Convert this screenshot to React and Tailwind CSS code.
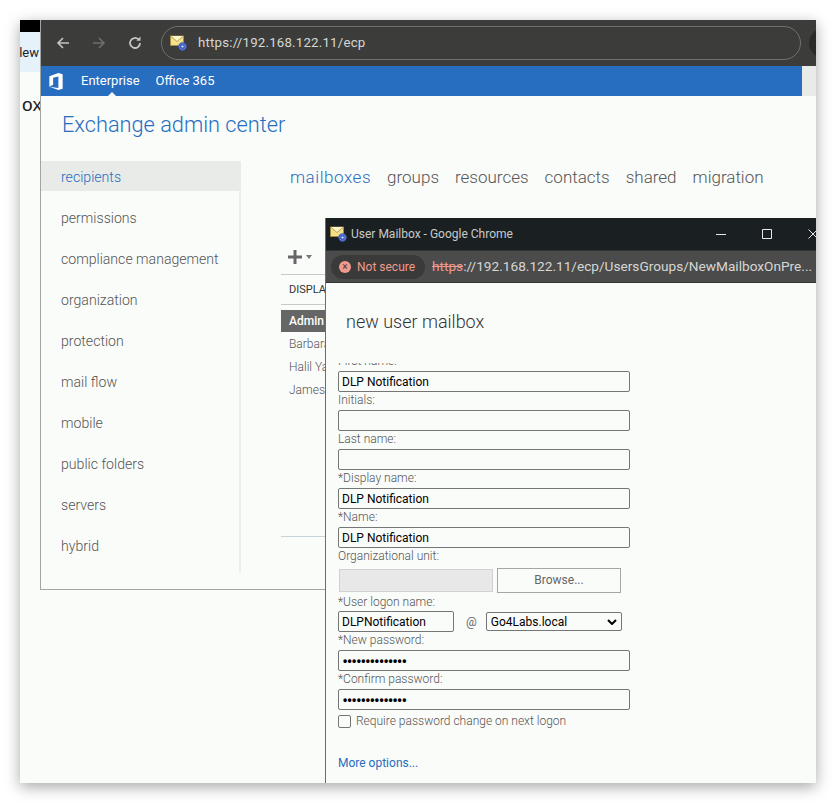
import React from "react";

const font = "font-['Roboto','Noto_Sans',sans-serif]";

const navItems = [
  "recipients",
  "permissions",
  "compliance management",
  "organization",
  "protection",
  "mail flow",
  "mobile",
  "public folders",
  "servers",
  "hybrid",
];

const tabs = ["mailboxes", "groups", "resources", "contacts", "shared", "migration"];

const people = ["Barbara", "Halil Ya", "James S"];

const CertIcon = ({ className }) => (
  <svg viewBox="0 0 17 16" className={className}>
    <path d="M0.500 1h13v9.500h-13z" fill="#f3e08a" stroke="#a98f3c" strokeWidth="0.8" />
    <path d="M0.500 1l6.500 5.500L13.500 1" fill="#fdf6c8" stroke="#a98f3c" strokeWidth="0.8" />
    <circle cx="12.500" cy="11.500" r="4.200" fill="#3c5cc4" />
    <circle cx="12.500" cy="11.500" r="2.800" fill="none" stroke="#9fb2ea" strokeWidth="0.8" strokeDasharray="1 1" />
    <circle cx="12.500" cy="11.500" r="1.100" fill="#dfe6fa" />
  </svg>
);

const Dots = () => (
  <span className="ml-px font-['Liberation_Sans',sans-serif] text-[12px] font-bold tracking-[0.35px]">••••••••••••••</span>
);

const Field = ({ label, value = "", hasDots }) => (
  <div className="flex flex-col">
    <div className="h-[18px] text-[12px] leading-[17px] font-light text-[#555]">{label}</div>
    <div className="h-[21px] w-[292px] rounded-[2px] border border-[#767676] px-[3px] text-[12px] leading-[21px] text-black">
      {hasDots ? <Dots /> : value}
    </div>
  </div>
);

const App = () => {
  return (
    <div className={`relative h-[803px] w-[836px] overflow-hidden bg-white ${font}`}>
      {/* Desktop window */}
      <div className="absolute left-5 top-5 h-[763px] w-[796px] overflow-hidden bg-[#fafcfa] shadow-[0_4px_14px_rgba(0,0,0,0.35)]">
        {/* Window behind, left strip */}
        <div className="absolute left-0 top-0 h-[12px] w-[21px] bg-black" />
        <div className="absolute left-0 top-[12px] flex h-[40px] w-[21px] items-center justify-end overflow-hidden bg-[#e6f2fa] pt-[2px] pr-[2px] text-[13px] text-[#222]">
          lew
        </div>
        <div className="absolute left-0 top-[73px] w-[21px] overflow-hidden pl-[2px] font-['Liberation_Sans',sans-serif] text-[19px] leading-[24px] whitespace-nowrap text-[#222]">
          ox
        </div>

        {/* Exchange browser window */}
        <div className="absolute left-[20px] top-0 h-[570px] w-[776px] border-b border-l border-[#a3a5a3]">
          <div className="flex h-[46px] items-center overflow-hidden bg-[#3c3d3a]">
            <div className="flex w-[100px] shrink-0 items-center">
              <svg viewBox="0 0 16 16" className="ml-[14px] h-[16px] w-[16px] shrink-0" fill="none" stroke="#c4c6c4" strokeWidth="1.600">
                <path d="M14 8H3M8 3L3 8l5 5" />
              </svg>
              <svg viewBox="0 0 16 16" className="ml-[20px] h-[16px] w-[16px] shrink-0" fill="none" stroke="#6e706e" strokeWidth="1.600">
                <path d="M2 8h11M8 3l5 5-5 5" />
              </svg>
              <svg viewBox="0 0 16 16" className="ml-[20px] h-[16px] w-[16px] shrink-0" fill="none" stroke="#c4c6c4" strokeWidth="1.800">
                <path d="M13 8a5 5 0 1 1-1.600-3.700" />
                <path d="M13.500 1.500v4.200H9.300" fill="#c4c6c4" stroke="none" />
              </svg>
            </div>
            <div className="ml-[20px] flex h-[34px] w-[640px] shrink-0 items-center rounded-full border border-[#6f716e] pl-[8px]">
              <CertIcon className="h-[16px] w-[17px]" />
              <span className="ml-[11px] text-[13.250px] tracking-[0.2px] text-[#d5d7d5]">https://192.168.122.11/ecp</span>
            </div>
            <div className="ml-[8px] h-[30px] w-[30px] shrink-0 rounded-full bg-[#2a2a2a]" />
          </div>

          <div className="flex h-[30px] bg-[#e8ebe8]">
            <div className="relative flex h-full w-[761px] items-center bg-[#276dc0] text-[13px] text-white">
              <svg viewBox="0 0 16 20" className="ml-[7px] h-[19px] w-[16px]" fill="#fff">
                <path d="M1 4.500L10.500 1 15 2.300v15.400L10.500 19 1 15.500l9.500 1.300V4.700L5 6v7.500l-4 2z" />
              </svg>
              <span className="ml-[17px]">Enterprise</span>
              <span className="ml-[16px]">Office 365</span>
              <div className="absolute bottom-0 left-[67px] h-0 w-0 border-x-[4px] border-b-[4px] border-x-transparent border-b-[#fafcfa]" />
            </div>
          </div>

          <div className="pl-[21px] pt-[13px] text-[21.750px] leading-[32px] font-light text-[#276dc0]">Exchange admin center</div>

          <div className="mt-[20px] flex">
            <div className="h-[412px] w-[200px] border-r-[2px] border-[#eceeec]">
              {navItems.map((item, i) => (
                <div
                  key={item}
                  className={
                    i === 0
                      ? "mb-[11px] h-[30px] w-[200px] bg-[#e8ebe8] pl-[20px] text-[14.100px] leading-[32px] font-light text-[#276dc0]"
                      : "mb-[11px] h-[30px] pl-[20px] text-[14.100px] leading-[32px] font-light whitespace-nowrap text-[#555]"
                  }
                >
                  {item}
                </div>
              ))}
            </div>
            <div className="pl-[40px]">
              <div className="ml-[9px] flex gap-[16px] text-[17px] leading-[32px] font-light text-[#555]">
                {tabs.map((tab, i) => (
                  <span key={tab} className={i === 0 ? "tracking-[0.55px] text-[#276dc0]" : ""}>
                    {tab}
                  </span>
                ))}
              </div>
              <div className="mt-[47px] flex h-[34px] w-[60px] items-center gap-[3px] pl-[6px]">
                <svg viewBox="0 0 16 16" className="h-[16px] w-[16px]" fill="#666">
                  <path d="M6.500 1h3v5.500H15v3H9.500V15h-3V9.500H1v-3h5.500z" />
                </svg>
                <span className="h-0 w-0 border-x-[3px] border-t-[4px] border-x-transparent border-t-[#777]" />
              </div>
              <div className="w-[300px] border-y border-[#c8cac8] py-[6px] pl-[8px] text-[11px] leading-[17px] text-[#333]">DISPLAY</div>
              <div className="mt-[5px] h-[22px] w-[300px] bg-[#666] pl-[8px] text-[12px] leading-[22px] font-medium text-white">Admin</div>
              {people.map((p) => (
                <div key={p} className="h-[23px] pl-[8px] text-[12px] leading-[25px] font-light text-[#555]">
                  {p}
                </div>
              ))}
              <div className="mt-[135px] w-[300px] border-t border-[#c5d3da]" />
            </div>
          </div>
        </div>

        {/* Popup window */}
        <div className="absolute left-[305px] top-[198px] h-[565px] w-[491px] border-l border-[#6b6d6b] bg-[#fafcfa]">
          <div className="flex h-[32px] items-center bg-[#1a2022] pl-[4px] text-[12px] text-[#c8caca]">
            <CertIcon className="h-[16px] w-[17px]" />
            <span className="ml-[4px]">User Mailbox - Google Chrome</span>
            <svg viewBox="0 0 110 12" className="ml-auto h-[12px] w-[110px]" fill="none" stroke="#e8e8e8" strokeWidth="1">
              <path d="M10 6.500h10M56.500 1.500h9v9h-9zM102.500 1.500l9 9M111.500 1.500l-9 9" />
            </svg>
          </div>
          <div className="flex h-[33px] items-center border-y border-[#333] bg-[#4b4b4b] pl-[5px] text-[13.650px] text-[#d5d7d5]">
            <div className="flex h-[24px] w-[94px] shrink-0 items-center rounded-full bg-[#3a3a3a] pl-[8px] text-[12px] text-[#f09a8c]">
              <span className="flex h-[12px] w-[12px] items-center justify-center rounded-full bg-[#f09a8c] text-[10px] leading-none text-[#3a3a3a]">×</span>
              <span className="ml-[6px]">Not secure</span>
            </div>
            <span className="ml-[7px] whitespace-nowrap">
              <span className="text-[#f09a8c] line-through">https</span>://192.168.122.11/ecp/UsersGroups/NewMailboxOnPre...
            </span>
          </div>

          <div className="pl-[20px] pt-[26px] text-[18px] leading-[26px] font-light text-[#333]">new user mailbox</div>

          {/* scrolled form, first label sits under the top edge */}
          <div className="mt-[28px] h-[420px] overflow-hidden pl-[12px]">
            <div className="mt-[-10px]">
              <Field label="First name:" value="DLP Notification" />
              <Field label="Initials:" />
              <Field label="Last name:" />
              <Field label="*Display name:" value="DLP Notification" />
              <Field label="*Name:" value="DLP Notification" />
              <div className="h-[18px] text-[12px] leading-[17px] font-light text-[#555]">Organizational unit:</div>
              <div className="flex h-[28px] items-center">
                <div className="ml-[1px] h-[23px] w-[154px] border border-[#d0d2d0] bg-[#e8e8e8]" />
                <div className="ml-[4px] h-[25px] w-[124px] border border-[#a5a7a5] text-center text-[12px] leading-[23px] text-[#666]">Browse...</div>
              </div>
              <div className="h-[17px] text-[12px] leading-[16px] font-light text-[#555]">*User logon name:</div>
              <div className="flex items-center">
                <div className="h-[21px] w-[116px] rounded-[2px] border border-[#767676] px-[3px] text-[12px] leading-[21px] text-black">DLPNotification</div>
                <span className="ml-[12px] text-[12px] text-[#666]">@</span>
                <div className="ml-[9px] flex h-[19px] w-[136px] items-center justify-between rounded-[2px] border border-[#767676] px-[4px] text-[12px] text-black">
                  Go4Labs.local
                  <svg viewBox="0 0 10 6" className="h-[6px] w-[10px]" fill="none" stroke="#000" strokeWidth="2">
                    <path d="M1 1l4 4 4-4" />
                  </svg>
                </div>
              </div>
              <Field label="*New password:" hasDots />
              <Field label="*Confirm password:" hasDots />
              <div className="mt-[3px] flex items-center">
                <div className="h-[13px] w-[13px] rounded-[2px] border border-[#767676]" />
                <span className="ml-[5px] text-[12px] leading-[16px] font-light text-[#555]">Require password change on next logon</span>
              </div>
              <div className="mt-[25px] text-[12px] leading-[18px] text-[#276dc0]">More options...</div>
            </div>
          </div>
        </div>
      </div>
    </div>
  );
};

export default App;
